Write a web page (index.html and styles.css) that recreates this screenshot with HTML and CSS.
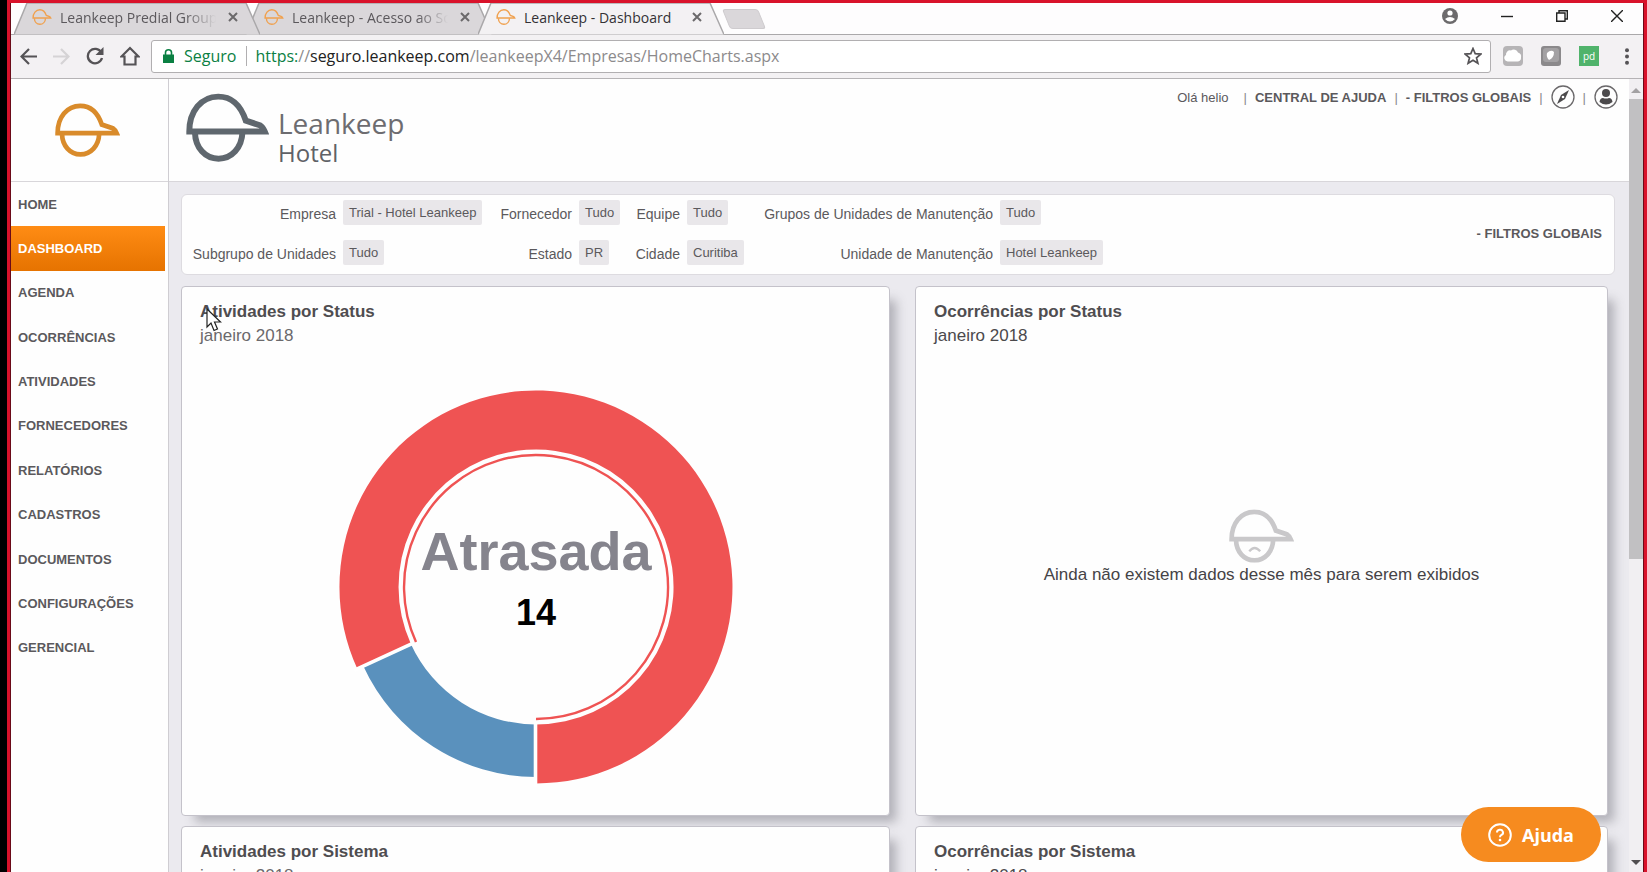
FILE: index.html
```html
<!DOCTYPE html>
<html lang="pt-BR">
<head>
<meta charset="utf-8">
<title>Leankeep - Dashboard</title>
<link rel="stylesheet" href="styles.css">
</head>
<body>
<svg class="defs" aria-hidden="true">
  <symbol id="cap" viewBox="0 0 250 206">
    <path d="M10 115 C10 54 46 10 97 10 C143 10 166 40 180 82 L224 97 Q231 101 237 115 Z" fill="none" stroke="currentColor" stroke-width="18"/>
    <path d="M27 118 C28 164 58 197 98 197 S168 164 170 118" fill="none" stroke="currentColor" stroke-width="18"/>
  </symbol>
  <symbol id="tab-shape" viewBox="0 0 246 32" preserveAspectRatio="none">
    <path d="M0 31.500 L13 0 H232 L246 31.500" stroke="#aaa8aa" stroke-width="1.500"/>
  </symbol>
  <symbol id="x" viewBox="0 0 10 10"><path d="M1 1 L9 9 M9 1 L1 9" stroke="currentColor" stroke-width="2"/></symbol>
</svg>

<div class="window">
  <div class="tabstrip">
    <div class="tab tab-first">
      <svg class="tab-bg"><use href="#tab-shape"/></svg>
      <svg class="favicon"><use href="#cap"/></svg>
      <span class="tab-title fade">Leankeep Predial Groupware</span>
      <button class="tab-close" aria-label="Fechar"><svg><use href="#x"/></svg></button>
    </div>
    <div class="tab">
      <svg class="tab-bg"><use href="#tab-shape"/></svg>
      <svg class="favicon"><use href="#cap"/></svg>
      <span class="tab-title fade">Leankeep - Acesso ao Software</span>
      <button class="tab-close" aria-label="Fechar"><svg><use href="#x"/></svg></button>
    </div>
    <div class="tab tab-active">
      <svg class="tab-bg"><use href="#tab-shape"/></svg>
      <svg class="favicon"><use href="#cap"/></svg>
      <span class="tab-title">Leankeep - Dashboard</span>
      <button class="tab-close" aria-label="Fechar"><svg><use href="#x"/></svg></button>
    </div>
    <button class="new-tab" aria-label="Nova guia"></button>
    <div class="window-controls">
      <button aria-label="Perfil"><svg width="16" height="16" viewBox="0 0 16 16"><circle cx="8" cy="8" r="8" fill="#6c6a6c"/><circle cx="8" cy="5" r="2.600" fill="#fff"/><path d="M3 11 Q8 7 13 11 Q8 16 3 11Z" fill="#fff"/></svg></button>
      <button aria-label="Minimizar"><svg width="12" height="12" viewBox="0 0 12 12"><path d="M0 6.500 H12" stroke="#222" stroke-width="1.400"/></svg></button>
      <button aria-label="Restaurar"><svg width="12" height="12" viewBox="0 0 12 12"><path d="M.7 3 H9 V11.300 H.7Z M3 3 V.7 H11.300 V9 H9" fill="none" stroke="#222" stroke-width="1.400"/></svg></button>
      <button aria-label="Fechar janela"><svg width="12" height="12" viewBox="0 0 12 12"><path d="M0 0 L12 12 M12 0 L0 12" stroke="#222" stroke-width="1.400"/></svg></button>
    </div>
  </div>

  <div class="toolbar">
    <button aria-label="Voltar"><svg width="17" height="17" viewBox="0 0 17 17"><path d="M9 1 L1.500 8.500 L9 16 M1.500 8.500 H17" fill="none" stroke="#555356" stroke-width="2.200"/></svg></button>
    <button aria-label="Avançar"><svg width="17" height="17" viewBox="0 0 17 17"><path d="M8 1 L15.500 8.500 L8 16 M15.500 8.500 H0" fill="none" stroke="#d5d3d5" stroke-width="2.200"/></svg></button>
    <button aria-label="Recarregar"><svg width="18" height="18" viewBox="0 0 18 18"><path d="M15.300 5.500 A7.200 7.200 0 1 0 16 11" fill="none" stroke="#555356" stroke-width="2.300"/><path d="M17.500 0 V8 H9.500Z" fill="#555356"/></svg></button>
    <button aria-label="Página inicial"><svg width="20" height="20" viewBox="0 0 20 20"><path d="M1.500 10.500 L10 2 L18.500 10.500 H15.500 V18.500 H4.500 V10.500Z" fill="none" stroke="#555356" stroke-width="2.200"/></svg></button>
    <div class="omnibox">
      <svg width="11" height="14" viewBox="0 0 11 14"><path d="M0 5.500 H11 V14 H0Z" fill="#0b8043"/><path d="M2.500 6 V3.500 a3 2.700 0 0 1 6 0 V6" fill="none" stroke="#0b8043" stroke-width="1.600"/></svg>
      <span class="secure">Seguro</span>
      <span class="url"><span class="scheme">https:</span>//<span class="host">seguro.leankeep.com</span>/leankeepX4/Empresas/HomeCharts.aspx</span>
      <button class="star" aria-label="Favoritar"><svg width="18" height="18" viewBox="0 0 18 18"><path d="M9 1.500 L11.200 6.700 L16.800 7.100 L12.500 10.800 L13.900 16.300 L9 13.300 L4.100 16.300 L5.500 10.800 L1.200 7.100 L6.800 6.700Z" fill="none" stroke="#555356" stroke-width="1.700"/></svg></button>
    </div>
    <div class="extensions">
      <button aria-label="Extensão nuvem"><svg width="20" height="20" viewBox="0 0 20 20"><rect width="20" height="20" rx="4" fill="#b6b4b6"/><path d="M5 15.500 a3.500 3.500 0 0 1-2-6.500 a4 4 0 0 1 5-4.500 a4.500 4.500 0 0 1 7 2 a4 4 0 0 1 3 5 a3.500 3.500 0 0 1-4 4 Z" fill="#fff"/></svg></button>
      <button aria-label="Extensão escudo"><svg width="20" height="20" viewBox="0 0 20 20"><rect width="20" height="20" rx="3" fill="#8b898b"/><rect x="2" y="2" width="16" height="14" rx="3" fill="#a3a1a3"/><path d="M6 7 Q10 3 13 6 Q13 12 8 14 Q5 11 6 7" fill="#fff"/></svg></button>
      <button class="pd" aria-label="Extensão pd">pd</button>
      <button class="more" aria-label="Menu"><svg width="4" height="17" viewBox="0 0 4 17"><circle cx="2" cy="2.200" r="2" fill="#555356"/><circle cx="2" cy="8.500" r="2" fill="#555356"/><circle cx="2" cy="14.800" r="2" fill="#555356"/></svg></button>
    </div>
  </div>

  <div class="page">
    <aside class="sidebar">
      <a class="brand" href="#" aria-label="Leankeep"><svg><use href="#cap"/></svg></a>
      <nav class="menu">
        <a href="#">HOME</a>
        <a href="#" class="current">DASHBOARD</a>
        <a href="#">AGENDA</a>
        <a href="#">OCORRÊNCIAS</a>
        <a href="#">ATIVIDADES</a>
        <a href="#">FORNECEDORES</a>
        <a href="#">RELATÓRIOS</a>
        <a href="#">CADASTROS</a>
        <a href="#">DOCUMENTOS</a>
        <a href="#">CONFIGURAÇÕES</a>
        <a href="#">GERENCIAL</a>
      </nav>
    </aside>

    <div class="content">
      <header class="header">
        <div class="logo">
          <svg><use href="#cap"/></svg>
          <div class="logo-text"><div class="logo-name">Leankeep</div><div class="logo-unit">Hotel</div></div>
        </div>
        <div class="account">
          <span class="hello">Olá helio</span>
          <span class="bar">|</span>
          <a href="#">CENTRAL DE AJUDA</a>
          <span class="bar">|</span>
          <a href="#">- FILTROS GLOBAIS</a>
          <span class="bar">|</span>
          <a class="round" href="#" aria-label="Explorar"><svg width="24" height="24" viewBox="0 0 24 24"><circle cx="12" cy="12" r="11" fill="none" stroke="#6a686a" stroke-width="1.300"/><path d="M18 5 L14 14 L6 19 L10 10Z" fill="#4c4a4c"/><circle cx="12" cy="12" r="1.300" fill="#fff"/></svg></a>
          <span class="bar">|</span>
          <a class="round" href="#" aria-label="Conta"><svg width="24" height="24" viewBox="0 0 24 24"><circle cx="12" cy="12" r="11" fill="none" stroke="#6a686a" stroke-width="1.300"/><circle cx="12" cy="8" r="4" fill="#4c4a4c"/><path d="M5.500 17 Q6 13 9 13 Q12 14 15 13 Q18 13 18.500 17 Q12 22 5.500 17Z" fill="#4c4a4c"/></svg></a>
        </div>
      </header>

      <main class="main">
        <section class="filters">
          <dl class="filter-grid">
            <dt>Empresa</dt><dd><span>Trial - Hotel Leankeep</span></dd>
            <dt>Fornecedor</dt><dd><span>Tudo</span></dd>
            <dt>Equipe</dt><dd><span>Tudo</span></dd>
            <dt>Grupos de Unidades de Manutenção</dt><dd><span>Tudo</span></dd>
            <dt>Subgrupo de Unidades</dt><dd><span>Tudo</span></dd>
            <dt>Estado</dt><dd><span>PR</span></dd>
            <dt>Cidade</dt><dd><span>Curitiba</span></dd>
            <dt>Unidade de Manutenção</dt><dd><span>Hotel Leankeep</span></dd>
          </dl>
          <a class="filter-link" href="#">- FILTROS GLOBAIS</a>
        </section>

        <section class="cards">
          <article class="card">
            <h2>Atividades por Status</h2>
            <p class="month soft">janeiro 2018</p>
            <svg class="donut" width="400" height="400" viewBox="-200 -200 400 400" role="img" aria-label="Atrasada 14">
              <path d="M0 196.500 A196.500 196.500 0 1 0 -178.700 81.800 L-125 57.200 A137.500 137.500 0 1 1 0 137.500Z" fill="#ef5353"/>
              <path d="M0 190 A190 190 0 0 1 -172.700 79 L-125 57.200 A137.500 137.500 0 0 0 0 137.500Z" fill="#5a91bd"/>
              <path d="M0 132 A132 132 0 1 0 -120 54.900" fill="none" stroke="#ef5353" stroke-width="2.400"/>
              <path d="M-.5 135 V200 M-122.800 56.200 L-182 83.300" stroke="#fff" stroke-width="3.600"/>
              <text class="donut-name" x="0" y="-17">Atrasada</text>
              <text class="donut-value" x="0" y="38">14</text>
            </svg>
          </article>
          <article class="card">
            <h2>Ocorrências por Status</h2>
            <p class="month">janeiro 2018</p>
            <div class="empty">
              <svg viewBox="0 0 250 206"><use href="#cap"/><path d="M78 162 Q98 136 120 162" fill="none" stroke="currentColor" stroke-width="9"/></svg>
              <p>Ainda não existem dados desse mês para serem exibidos</p>
            </div>
          </article>
          <article class="card">
            <h2>Atividades por Sistema</h2>
            <p class="month soft">janeiro 2018</p>
          </article>
          <article class="card">
            <h2>Ocorrências por Sistema</h2>
            <p class="month">janeiro 2018</p>
          </article>
        </section>
      </main>
    </div>

    <div class="scrollbar">
      <span class="arrow arrow-up"></span>
      <span class="thumb"></span>
      <span class="arrow arrow-down"></span>
    </div>
  </div>
</div>

<button class="help">
  <svg width="24" height="24" viewBox="0 0 24 24"><circle cx="12" cy="12" r="10.800" fill="none" stroke="#fff" stroke-width="2"/><path d="M9 9.500 a3 2.800 0 1 1 4.500 2.400 q-1.500 .8-1.500 2.300" fill="none" stroke="#fff" stroke-width="2"/><circle cx="12" cy="17" r="1.300" fill="#fff"/></svg>
  Ajuda
</button>
<svg class="cursor" width="16" height="24" viewBox="0 0 16 24"><path d="M1 1 V19 L5 15 L8 22.500 L11.500 21 L8.500 14 H14.500Z" fill="#fff" stroke="#222" stroke-width="1.200"/></svg>
</body>
</html>
```

FILE: styles.css
```css
* { box-sizing: border-box; }
body {
  margin: 0;
  height: 100vh;
  overflow: hidden;
  background: #000;
  color: #5b595c;
  font-family: "Liberation Sans", Arial, sans-serif;
  font-size: 13px;
}
a { color: inherit; text-decoration: none; }
button { margin: 0; padding: 0; border: 0; background: none; font: inherit; color: inherit; display: flex; align-items: center; justify-content: center; }
h2, p, dl, dd { margin: 0; }
.defs { position: absolute; width: 0; height: 0; }

.window {
  height: 100vh;
  margin-left: 7px;
  border: solid #d9122b;
  border-width: 3px 3px 0 3px;
  padding: 0 1px;
  background: #6b0a18;
  display: flex;
  flex-direction: column;
}

/* Browser chrome */
.tabstrip {
  flex: none;
  height: 32px;
  display: flex;
  padding-left: 3px;
  background: linear-gradient(#aaa8aa, #aaa8aa) bottom / 100% 1px no-repeat #fefdfe;
  font-family: "Open Sans", "Noto Sans", sans-serif;
  font-size: 14px;
}
.tab {
  position: relative;
  isolation: isolate;
  width: 246px;
  height: 32px;
  margin-left: -14px;
  padding: 0 22px 4px 18px;
  display: flex;
  align-items: center;
  color: #5b585c;
  fill: #dad7da;
}
.tab-first { margin-left: 0; z-index: 1; }
.tab-active { z-index: 2; color: #333135; fill: #f3f1f3; }
.tab-bg { position: absolute; left: 0; top: 0; z-index: -1; width: 246px; height: 32px; }
.favicon { flex: none; width: 20px; height: 16px; margin-right: 8px; color: #f0a14f; }
.tab-title { flex: 1; overflow: hidden; white-space: nowrap; }
.fade { -webkit-mask-image: linear-gradient(90deg, #000 80%, transparent); mask-image: linear-gradient(90deg, #000 80%, transparent); }
.tab-close { width: 10px; margin-left: 12px; color: #6b696b; }
.tab-close svg { width: 10px; height: 10px; }
.new-tab { width: 36px; height: 20px; margin: 6px 0 0 2px; background: #dad7da; border: 1px solid #cecbce; border-radius: 3px; transform: skewX(22deg); }
.window-controls { margin-left: auto; padding: 0 20px 6px 0; display: flex; align-items: center; gap: 43px; }

.toolbar {
  flex: none;
  height: 44px;
  display: flex;
  align-items: center;
  gap: 16px;
  padding: 0 14px 1px 9px;
  background: #f3f1f3;
  border-bottom: 1px solid #b5b3b5;
  font-family: "Open Sans", "Noto Sans", sans-serif;
}
.omnibox {
  flex: 1;
  height: 33px;
  margin-left: -5px;
  display: flex;
  align-items: center;
  padding: 0 8px 0 11px;
  background: #fff;
  border: 1px solid #b1afb1;
  border-radius: 3px;
  font-size: 16px;
}
.secure { margin: 0 8px 0 10px; padding-right: 10px; border-right: 1px solid #b1afb1; color: #0b8043; line-height: 20px; }
.url { color: #8c8a8c; }
.scheme { color: #0b8043; }
.host { color: #222; }
.star { margin-left: auto; }
.extensions { display: flex; align-items: center; gap: 18px; margin-left: -4px; }
.pd { width: 20px; height: 20px; background: #50b36b; color: #fff; font-size: 10px; }
.more { margin-left: 8px; }

/* Application */
.page { flex: 1; min-height: 0; display: grid; grid-template-columns: 158px minmax(0, 1fr) 14px; background: #fff; }
.sidebar { background: #fefefe; border-right: 1px solid #cfcdd2; }
.brand { height: 103px; display: flex; align-items: center; justify-content: center; padding: 0 4px 0 0; border-bottom: 1px solid #d8d6da; color: #d98b2b; }
.brand svg { width: 65px; height: 54px; }
.menu { height: 488px; padding-right: 3px; display: grid; grid-auto-rows: 1fr; font-weight: bold; }
.menu a { display: flex; align-items: center; padding-left: 7px; }
.menu .current { color: #fff; background: linear-gradient(#ff8c14, #e67300); }

.content { display: flex; flex-direction: column; min-height: 0; overflow: hidden; background: #ebeaef; }
.header { flex: none; height: 103px; display: flex; justify-content: space-between; align-items: flex-start; padding: 6px 11px 0 17px; background: #fefefe; border-bottom: 1px solid #d8d6da; }
.logo { display: flex; padding-top: 8px; gap: 9px; color: #5f676e; }
.logo > svg { width: 83px; height: 69px; }
.logo-text { padding-top: 14px; font-family: "Open Sans", "Noto Sans", sans-serif; color: #6d6c70; }
.logo-name { font-size: 28px; line-height: 32px; }
.logo-unit { font-size: 24px; line-height: 28px; color: #5f6166; }
.account { display: flex; align-items: center; gap: 8px; }
.account a { font-weight: bold; }
.hello { margin-right: 7px; }
.bar { color: #8a888c; }
.round { display: flex; }

.main { padding: 12px 14px 0 12px; }
.filters { display: flex; align-items: center; justify-content: space-between; height: 81px; padding: 0 12px 2px 0; background: #fefefe; border: 1px solid #dddbe0; border-radius: 6px; }
.filter-grid { display: grid; grid-template-columns: 161px 141px 95px 41px 67px 57px 256px auto; row-gap: 15px; align-items: center; white-space: nowrap; padding-bottom: 3px; }
.filter-grid dt { padding: 4px 7px 0 0; text-align: right; font-size: 14px; line-height: 21px; }
.filter-grid span { display: inline-block; padding: 0 6px; line-height: 25px; background: #e9e7ea; border-radius: 2px; }
.filter-link { font-weight: bold; }

.cards { display: grid; grid-template-columns: 709fr 693fr; column-gap: 25px; row-gap: 10px; padding: 11px 7px 20px 0; }
.card { display: flex; flex-direction: column; min-height: 530px; padding: 13px 18px; background: #fefefe; border: 1px solid #c4c2ca; border-radius: 4px; box-shadow: 10px 10px 10px -4px rgba(70, 68, 80, .35); font-size: 17px; line-height: 24px; }
.card h2 { font-size: 17px; line-height: 24px; color: #4f4d50; }
.month { color: #4b494c; }
.soft { color: #6b696c; }
.donut { align-self: center; margin-top: 39px; }
.donut text { font-weight: bold; text-anchor: middle; }
.donut-name { font-size: 54px; fill: #85848d; }
.donut-value { font-size: 36px; fill: #000; }
.empty { flex: 1; display: flex; flex-direction: column; align-items: center; padding-top: 161px; color: #454346; }
.empty svg { width: 65px; height: 54px; color: #c9c8ca; }

.scrollbar { display: flex; flex-direction: column; align-items: center; background: #f1eff2; }
.arrow { border: 5px solid transparent; }
.arrow-up { margin-top: 4px; border-bottom-color: #a3a1a3; }
.thumb { width: 14px; height: 58%; margin-top: 6px; background: #c1c0c2; }
.arrow-down { margin: auto 0 2px; border-top-color: #504e50; }

.help {
  position: fixed;
  right: 46px;
  bottom: 10px;
  width: 140px;
  height: 55px;
  gap: 10px;
  border-radius: 28px;
  background: #f68b1f;
  color: #fff;
  font: bold 18px "Open Sans", "Noto Sans", sans-serif;
}
.cursor { position: fixed; left: 206px; top: 308px; }
```
